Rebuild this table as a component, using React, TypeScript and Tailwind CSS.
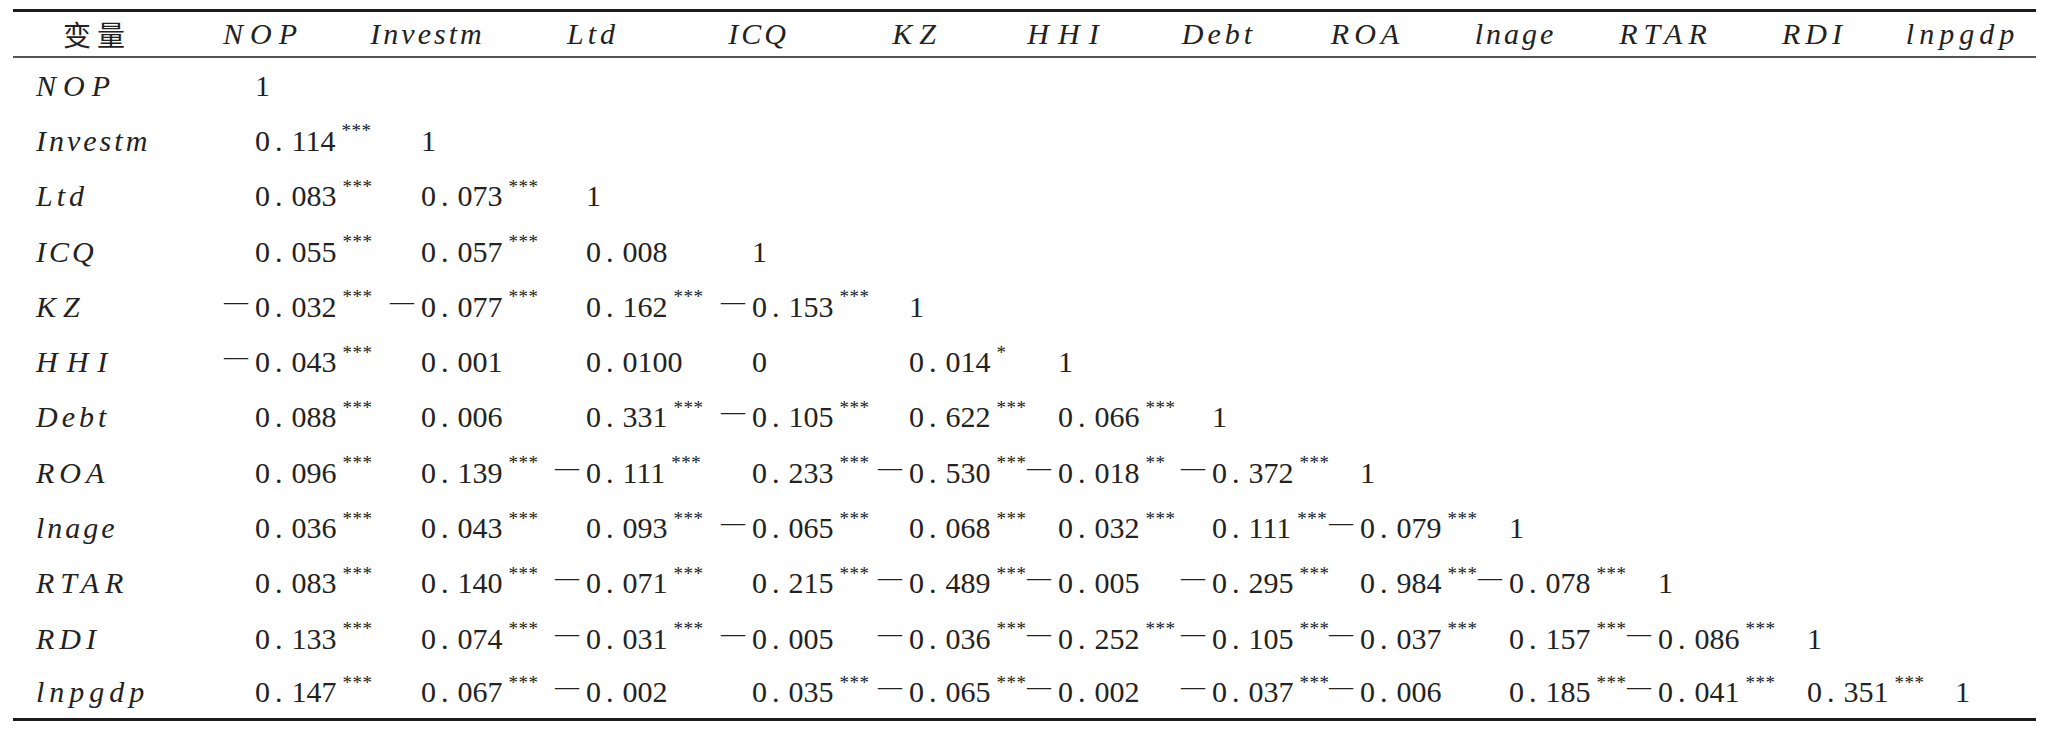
import React from "react";

/* ---------- data ---------- */
const cols = ["NOP", "Investm", "Ltd", "ICQ", "KZ", "HHI", "Debt", "ROA", "lnage", "RTAR", "RDI", "lnpgdp"];

// letter spacing per variable name (row label / header, header gets left pad to stay centred)
const spacing: Record<string, { row: string; head: string }> = {
  NOP: { row: "tracking-[7px]", head: "tracking-[7px] pl-[7px]" },
  Investm: { row: "tracking-[3px]", head: "tracking-[3px] pl-[3px]" },
  Ltd: { row: "tracking-[4px]", head: "tracking-[4px] pl-[4px]" },
  ICQ: { row: "tracking-[3px]", head: "tracking-[3px] pl-[3px]" },
  KZ: { row: "tracking-[7px]", head: "tracking-[7px] pl-[7px]" },
  HHI: { row: "tracking-[9px]", head: "tracking-[9px] pl-[9px]" },
  Debt: { row: "tracking-[4px]", head: "tracking-[4px] pl-[4px]" },
  ROA: { row: "tracking-[5px]", head: "tracking-[5px] pl-[5px]" },
  lnage: { row: "tracking-[3px]", head: "tracking-[3px] pl-[3px]" },
  RTAR: { row: "tracking-[6px]", head: "tracking-[6px] pl-[6px]" },
  RDI: { row: "tracking-[5px]", head: "tracking-[5px] pl-[5px]" },
  lnpgdp: { row: "tracking-[5px]", head: "tracking-[5px] pl-[5px]" },
};

const rows: string[][] = [
  ["1"],
  ["0.114***", "1"],
  ["0.083***", "0.073***", "1"],
  ["0.055***", "0.057***", "0.008", "1"],
  ["-0.032***", "-0.077***", "0.162***", "-0.153***", "1"],
  ["-0.043***", "0.001", "0.0100", "0", "0.014*", "1"],
  ["0.088***", "0.006", "0.331***", "-0.105***", "0.622***", "0.066***", "1"],
  ["0.096***", "0.139***", "-0.111***", "0.233***", "-0.530***", "-0.018**", "-0.372***", "1"],
  ["0.036***", "0.043***", "0.093***", "-0.065***", "0.068***", "0.032***", "0.111***", "-0.079***", "1"],
  ["0.083***", "0.140***", "-0.071***", "0.215***", "-0.489***", "-0.005", "-0.295***", "0.984***", "-0.078***", "1"],
  ["0.133***", "0.074***", "-0.031***", "-0.005", "-0.036***", "-0.252***", "-0.105***", "-0.037***", "0.157***", "-0.086***", "1"],
  ["0.147***", "0.067***", "-0.002", "0.035***", "-0.065***", "-0.002", "-0.037***", "-0.006", "0.185***", "-0.041***", "0.351***", "1"],
];

const grid =
  "grid grid-cols-[242px_166px_165px_166px_157px_149px_154px_148px_149px_149px_149px_148px_81px]";

/* ---------- cells ---------- */
function Value({ v }: { v: string }) {
  const neg = v.startsWith("-");
  const body = neg ? v.slice(1) : v;
  const stars = body.match(/\*+$/)?.[0] ?? "";
  const num = stars ? body.slice(0, -stars.length) : body;
  const [int, frac] = num.split(".");
  return (
    <div className="flex items-center whitespace-nowrap leading-none">
      {neg && <span className="relative -top-[6px] -ml-[31px] mr-[7px] text-[24px]">—</span>}
      <span>{int}</span>
      {frac !== undefined && (
        <>
          <span className="ml-[5px] mr-[9px]">.</span>
          <span>{frac}</span>
        </>
      )}
      {stars && <span className="relative -top-[10px] ml-[6px] text-[19px] tracking-[0.5px]">{stars}</span>}
    </div>
  );
}

function HeaderRow() {
  return (
    <div className={`${grid} h-[46px] items-center border-b-2 border-[#555]`}>
      <div className="pl-[50px] font-['Noto_Sans_CJK_SC',sans-serif] text-[28px] leading-none tracking-[6px]">变量</div>
      {cols.map((c) => (
        <div key={c} className="flex w-[10px] justify-center">
          <span className={`whitespace-nowrap italic leading-none ${spacing[c].head}`}>{c}</span>
        </div>
      ))}
    </div>
  );
}

export default function App() {
  return (
    <div className="h-[736px] w-[2048px] bg-white pt-[9px] font-['Liberation_Serif',serif] text-[30px] text-[#222]">
      <div className="ml-[13px] w-[2023px] border-y-[3px] border-[#1c1c1c]">
        <HeaderRow />
        {rows.map((r, i) => (
          <div key={cols[i]} className={`${grid} items-center ${i === rows.length - 1 ? "h-[52px]" : "h-[55.3px]"}`}>
            <div className={`pl-[23px] italic leading-none whitespace-nowrap ${spacing[cols[i]].row}`}>{cols[i]}</div>
            {r.map((v, j) => (
              <Value key={j} v={v} />
            ))}
          </div>
        ))}
      </div>
    </div>
  );
}
